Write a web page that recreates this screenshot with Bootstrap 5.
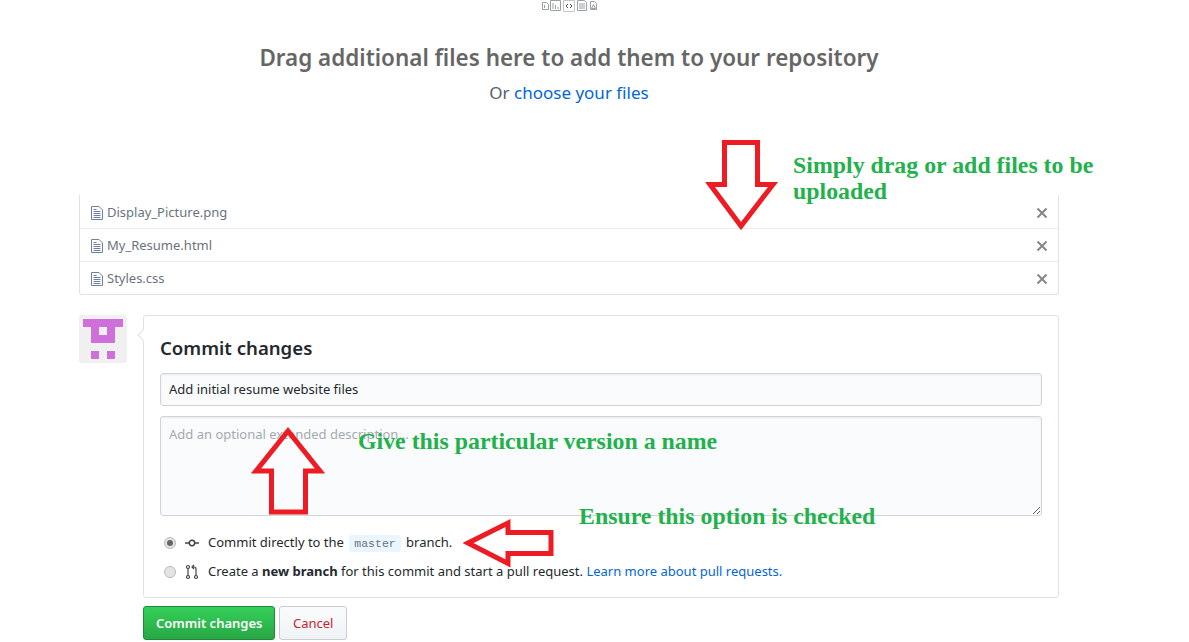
<!DOCTYPE html>
<html lang="en">
<head>
<meta charset="utf-8">
<title>Upload files</title>
<link href="https://cdn.jsdelivr.net/npm/bootstrap@5.3.0/dist/css/bootstrap.min.css" rel="stylesheet">
<style>
html,body{height:642px;overflow:hidden;background:#fff}
body{font-family:"Noto Sans","Open Sans",sans-serif;font-size:13px;color:#24292e;position:relative}
.top-zone{width:1138px}
.top-icons{height:12px}
.drop-title{margin:30px 0 0;font-size:22.45px;line-height:32px;font-weight:600;color:#666}
.drop-sub{margin:6px 0 0;font-size:17px;line-height:26px;color:#586069}
.drop-sub a,.learn{color:#0366d6;text-decoration:none}
.wrap{width:980px;margin-left:79px}
.file-list{margin-top:89px;border:1px solid #dfe2e5;border-top:0;border-radius:0 0 3px 3px}
.file-row{height:33px;padding:2px 10px 0;color:#6a737d;font-size:13px}
.file-row+.file-row{border-top:1px solid #eaecef}
.file-name{gap:3px}
.file-x{width:12px;height:12px}
.commit{margin-top:20px;gap:16px}
.avatar-box{width:48px;height:48px;background:#f0f0f0;border-radius:3px;flex:none}
.commit-main{flex:1;min-width:0}
.commit-box{height:283px;border:1px solid #dfe2e5;border-radius:3px;padding:16px;position:relative}
.commit-box::before{content:"";position:absolute;left:-5px;top:15px;width:8px;height:8px;background:#fff;border-left:1px solid #dfe2e5;border-bottom:1px solid #dfe2e5;transform:rotate(45deg)}
.commit-title{margin:3px 0 12px;font-size:18.6px;line-height:26px;font-weight:600;color:#24292e}
.field{display:block;width:100%;background:#fafbfc;border:1px solid #d1d5da;border-radius:3px;padding:0 8px;font-size:13px;color:#24292e;box-shadow:inset 0 1px 2px rgba(27,31,35,.075)}
.field-one{height:33px;padding-bottom:2px}
.field-two{height:100px;margin-top:10px;padding-top:8px;resize:vertical}
.field-two::placeholder{color:#a3aab1;opacity:1}
.opts{margin-top:12px;font-size:13px}
.opt{height:29px;gap:9px;padding-left:4px}
.opt-dot{width:12px;height:12px;border-radius:50%;background:#e4e4e4;border:1px solid #bbb;flex:none;display:flex;align-items:center;justify-content:center}
.opt-dot i{width:6px;height:6px;border-radius:50%;background:#666;display:block}
.opt-ico{width:14px;height:16px;flex:none}
.branch{font-family:"Liberation Mono",monospace;font-size:11.5px;background:#eaf5ff;color:#6a737d;border-radius:3px;padding:2px 5px;margin:0 2px}
.act{margin-top:8px;gap:4px}
.btn-go{height:34px;padding:1px 12px 0;font-size:13px;font-weight:600;color:#fff;border:1px solid #1e8a38;border-radius:3px;background:linear-gradient(#34d058,#28a745)}
.btn-go:hover{color:#fff}
.btn-no{height:34px;padding:1px 12.500px 0;font-size:13px;color:#cb2431;border:1px solid #c9cdd2;border-radius:3px;background:linear-gradient(#fafbfc,#eff3f6)}
.note{position:absolute;font-family:"Liberation Serif",serif;font-weight:700;font-size:23.85px;line-height:26px;color:#22b14c;margin:0}
.note-a{left:793px;top:152px;width:340px}
.note-b{left:358px;top:428px}
.note-c{left:579px;top:503px}
.arrow{position:absolute;left:0;top:0;pointer-events:none}
</style>
</head>
<body>
<div class="top-zone">
  <div class="top-icons d-flex justify-content-center align-items-start">
    <svg width="60" height="12" viewBox="0 0 60 12" fill="none" stroke="#9aa0a6" stroke-width="1">
      <path d="M3.500 2.500h4l2 2v5h-6z"/><path d="M5.500 5v3"/>
      <path d="M11.500 .5h10v10h-10z"/><path d="M14 9v-6M16.500 9v-4M19 9v-2"/>
      <path d="M24.500 .5h11v11h-11z" stroke="#c3c7cb"/><path d="M29 4l-2 2 2 2M31 4l2 2-2 2" stroke="#555"/>
      <path d="M38.500 .5h7l2 2v8h-9z"/><path d="M40 4h6M40 6h6M40 8h6"/>
      <path d="M51.500 1.500h4l2 2v6h-6z"/><path d="M52.500 8.500l2-4 2 4z"/>
    </svg>
  </div>
  <div class="text-center">
    <h2 class="drop-title">Drag additional files here to add them to your repository</h2>
    <p class="drop-sub">Or <a href="#">choose your files</a></p>
  </div>
</div>
<div class="wrap">
  <div class="file-list">
    <div class="file-row d-flex align-items-center justify-content-between">
      <span class="file-name d-flex align-items-center"><svg width="14" height="16" viewBox="0 0 14 16" fill="none" stroke="#6a82a8"><path d="M1.500 1.500h7.500l3.500 3.500v9.500h-11z"/><path d="M3.500 6.500h7M3.500 8.500h7M3.500 10.500h7M3.500 12.500h7M3.500 4.500h3"/></svg>Display_Picture.png</span>
      <svg class="file-x" viewBox="0 0 12 12" stroke="#868686" stroke-width="2"><path d="M1.500 1.500l9 9M10.500 1.500l-9 9"/></svg>
    </div>
    <div class="file-row d-flex align-items-center justify-content-between">
      <span class="file-name d-flex align-items-center"><svg width="14" height="16" viewBox="0 0 14 16" fill="none" stroke="#6a82a8"><path d="M1.500 1.500h7.500l3.500 3.500v9.500h-11z"/><path d="M3.500 6.500h7M3.500 8.500h7M3.500 10.500h7M3.500 12.500h7M3.500 4.500h3"/></svg>My_Resume.html</span>
      <svg class="file-x" viewBox="0 0 12 12" stroke="#868686" stroke-width="2"><path d="M1.500 1.500l9 9M10.500 1.500l-9 9"/></svg>
    </div>
    <div class="file-row d-flex align-items-center justify-content-between">
      <span class="file-name d-flex align-items-center"><svg width="14" height="16" viewBox="0 0 14 16" fill="none" stroke="#6a82a8"><path d="M1.500 1.500h7.500l3.500 3.500v9.500h-11z"/><path d="M3.500 6.500h7M3.500 8.500h7M3.500 10.500h7M3.500 12.500h7M3.500 4.500h3"/></svg>Styles.css</span>
      <svg class="file-x" viewBox="0 0 12 12" stroke="#868686" stroke-width="2"><path d="M1.500 1.500l9 9M10.500 1.500l-9 9"/></svg>
    </div>
  </div>
  <div class="commit d-flex align-items-start">
    <div class="avatar-box">
      <svg width="48" height="48" viewBox="0 0 48 48" fill="#cf6fd9"><path d="M4 4h40v8h-8v16H12V12H4zM20 12v8h8v-8z" fill-rule="evenodd"/><rect x="12" y="36" width="8" height="8"/><rect x="28" y="36" width="8" height="8"/></svg>
    </div>
    <div class="commit-main">
      <div class="commit-box">
        <h3 class="commit-title">Commit changes</h3>
        <input class="field field-one" type="text" value="Add initial resume website files" aria-label="Commit summary">
        <textarea class="field field-two" placeholder="Add an optional extended description..." aria-label="Description"></textarea>
        <div class="opts">
          <div class="opt d-flex align-items-center">
            <span class="opt-dot"><i></i></span>
            <svg class="opt-ico" viewBox="0 0 14 16" fill="none" stroke="#444" stroke-width="1.500"><circle cx="7" cy="8" r="2.700"/><path d="M0 8h4.300M9.700 8H14"/></svg>
            <span>Commit directly to the <code class="branch">master</code> branch.</span>
          </div>
          <div class="opt d-flex align-items-center">
            <span class="opt-dot"></span>
            <svg class="opt-ico" viewBox="0 0 14 16" fill="none" stroke="#444" stroke-width="1.200"><circle cx="3" cy="3" r="1.500"/><circle cx="3" cy="13" r="1.500"/><circle cx="11" cy="13" r="1.500"/><path d="M3 4.500v7M11 11.500V5c0-1.500-1-2-2-2H7.500M9 1L7 3l2 2"/></svg>
            <span>Create a <strong>new branch</strong> for this commit and start a pull request. <a class="learn" href="#">Learn more about pull requests.</a></span>
          </div>
        </div>
      </div>
      <div class="act d-flex">
        <button class="btn btn-go" type="button">Commit changes</button>
        <button class="btn btn-no" type="button">Cancel</button>
      </div>
    </div>
  </div>
</div>

<svg class="arrow" width="1189" height="642" fill="none" stroke="#ed1c24" stroke-width="5" stroke-linejoin="miter">
  <path d="M724.500 142.500h33v42h15.500L741 226l-31-41.500h14.500z"/>
  <path d="M288 431l32 40h-14.500v41h-34v-41H256z"/>
  <path d="M468 543l40-20v9.500h43v21h-43v10z"/>
</svg>
<p class="note note-a">Simply drag or add files to be uploaded</p>
<p class="note note-b">Give this particular version a name</p>
<p class="note note-c">Ensure this option is checked</p>
<script src="https://cdn.jsdelivr.net/npm/bootstrap@5.3.0/dist/js/bootstrap.bundle.min.js"></script>
</body>
</html>
